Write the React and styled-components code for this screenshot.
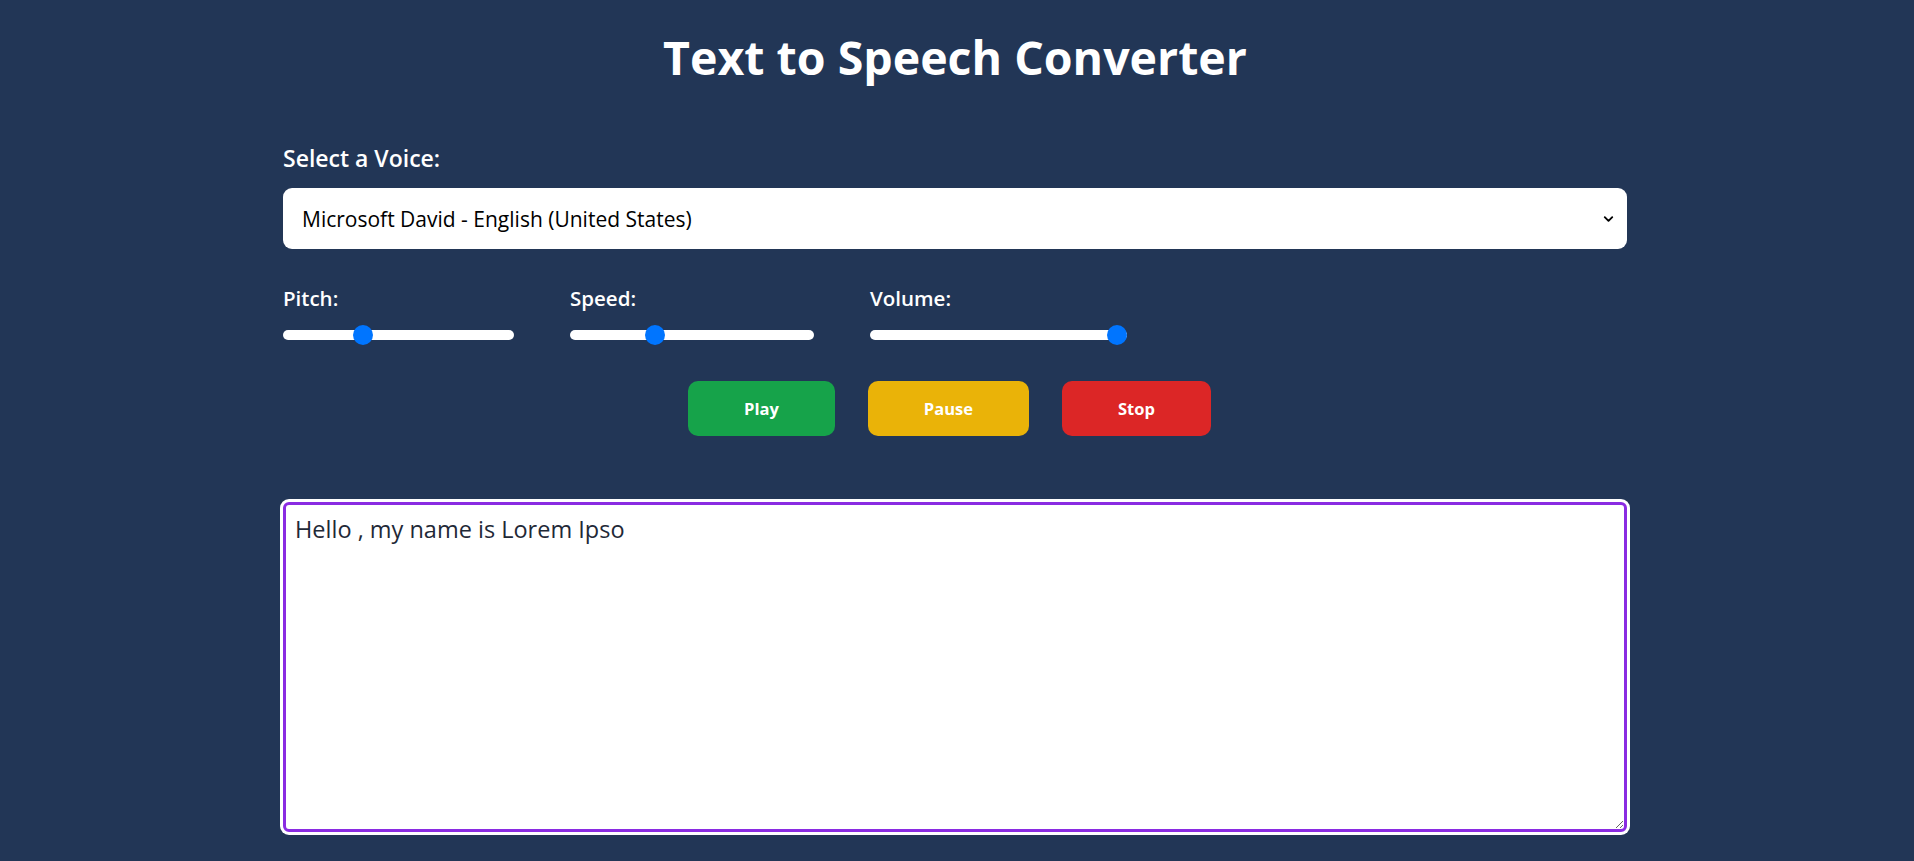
import { useEffect, useRef } from "react";
import styled, { createGlobalStyle } from "styled-components";
import { ChevronDown } from "lucide-react";

const GlobalStyle = createGlobalStyle`
  body {
    margin: 0;
    background: #223656;
    font-family: "Open Sans", "Noto Sans", sans-serif;
  }
`;

export default function App() {
  const areaRef = useRef(null);

  useEffect(() => {
    const el = areaRef.current;
    if (el) {
      el.focus();
      el.setSelectionRange(el.value.length, el.value.length);
    }
  }, []);

  return (
    <Page>
      <GlobalStyle />
      <Title>Text to Speech Converter</Title>
      <Container>
        <VoiceLabel>Select a Voice:</VoiceLabel>
        <SelectWrap>
          <VoiceSelect defaultValue="david">
            <option value="david">Microsoft David - English (United States)</option>
            <option value="zira">Microsoft Zira - English (United States)</option>
          </VoiceSelect>
          <Chevron size={15} strokeWidth={3} />
        </SelectWrap>

        <Sliders>
          <SliderGroup $width={231}>
            <SliderLabel>Pitch:</SliderLabel>
            <Range type="range" min="0.5" max="2" step="0.1" defaultValue="1" />
          </SliderGroup>
          <SliderGroup $width={244}>
            <SliderLabel>Speed:</SliderLabel>
            <Range type="range" min="0.5" max="2" step="0.1" defaultValue="1" />
          </SliderGroup>
          <SliderGroup $width={257}>
            <SliderLabel>Volume:</SliderLabel>
            <Range type="range" min="0" max="1" step="0.1" defaultValue="1" />
          </SliderGroup>
        </Sliders>

        <Buttons>
          <Button $bg="#16a34a">Play</Button>
          <Button $bg="#eab308">Pause</Button>
          <Button $bg="#dc2626">Stop</Button>
        </Buttons>

        <TextArea ref={areaRef} defaultValue="Hello , my name is Lorem Ipso" />
      </Container>
    </Page>
  );
}

const Page = styled.div`
  min-height: 100vh;
  padding: 28px 4px 0 0;
  box-sizing: border-box;
`;

const Title = styled.h1`
  margin: 0;
  text-align: center;
  color: #fff;
  font-size: 46.5px;
  line-height: 58px;
  font-weight: 700;
`;

const Container = styled.div`
  width: 1344px;
  margin: 56px auto 0;
  display: flex;
  flex-direction: column;
`;

const VoiceLabel = styled.label`
  color: #fff;
  font-size: 23px;
  line-height: 32px;
  font-weight: 600;
  margin-bottom: 14px;
`;

const SelectWrap = styled.div`
  position: relative;
`;

const VoiceSelect = styled.select`
  appearance: none;
  width: 100%;
  height: 61px;
  border: none;
  border-radius: 9px;
  background: #fff;
  padding: 0 40px 0 19px;
  font-family: "Open Sans", "Noto Sans", sans-serif;
  font-size: 21px;
  color: #000;
  outline: none;
`;

const Chevron = styled(ChevronDown)`
  position: absolute;
  right: 11px;
  top: 50%;
  transform: translateY(-50%);
  color: #000;
  pointer-events: none;
`;

const Sliders = styled.div`
  display: flex;
  gap: 56px;
  margin-top: 36px;
`;

const SliderGroup = styled.div`
  width: ${(p) => p.$width}px;
  display: flex;
  flex-direction: column;
  gap: 13px;
`;

const SliderLabel = styled.label`
  color: #fff;
  font-size: 20.5px;
  line-height: 27px;
  font-weight: 600;
`;

const Range = styled.input`
  appearance: none;
  -webkit-appearance: none;
  width: 100%;
  height: 20px;
  margin: 0;
  background: transparent;

  &::-webkit-slider-runnable-track {
    height: 10px;
    background: #fff;
    border-radius: 5px;
  }
  &::-webkit-slider-thumb {
    -webkit-appearance: none;
    width: 20px;
    height: 20px;
    margin-top: -5px;
    border-radius: 50%;
    background: #0075ff;
    border: none;
  }
`;

const Buttons = styled.div`
  display: flex;
  justify-content: center;
  gap: 33px;
  margin-top: 36px;
  padding-right: 11px;
`;

const Button = styled.button`
  height: 55px;
  padding: 0 56px;
  border: none;
  border-radius: 10px;
  background: ${(p) => p.$bg};
  color: #fff;
  font-family: "Open Sans", "Noto Sans", sans-serif;
  font-size: 16.5px;
  font-weight: 700;
  cursor: pointer;
`;

const TextArea = styled.textarea`
  margin-top: 66px;
  height: 330px;
  box-sizing: border-box;
  border: 3px solid #8a2be2;
  border-radius: 6px;
  box-shadow: 0 0 0 3px #fff;
  outline: none;
  padding: 8px 9px;
  font-family: "Open Sans", "Noto Sans", sans-serif;
  font-size: 23.5px;
  line-height: 1.4;
  color: #1f2937;
  background: #fff;
`;
